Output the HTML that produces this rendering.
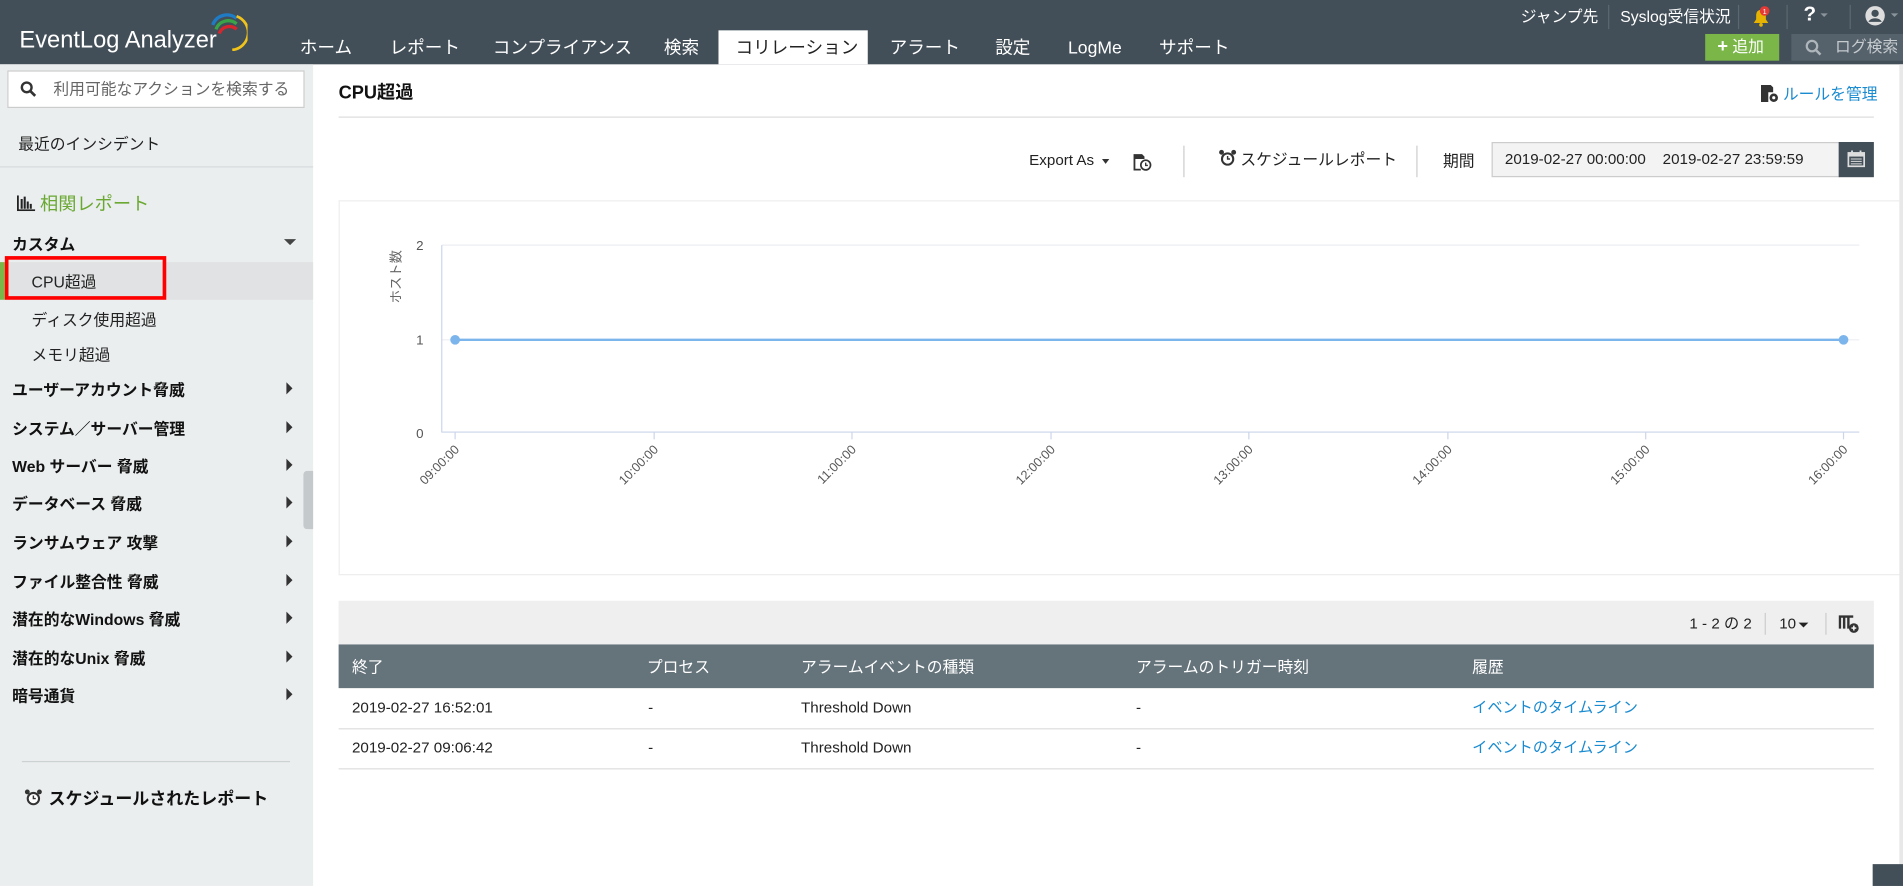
<!DOCTYPE html>
<html><head><meta charset="utf-8"><style>
*{margin:0;padding:0;box-sizing:border-box}
html,body{width:1903px;height:886px;overflow:hidden;background:#fff}
body{font-family:"Liberation Sans","Noto Sans CJK JP",sans-serif;color:#222;line-height:17px}
#w{position:absolute;left:0;top:0;width:1568px;height:730px;transform:scale(1.21365);transform-origin:0 0}
.a{position:absolute;white-space:nowrap}
.hdr{left:0;top:0;width:1568px;height:53px;background:#434f58}
.tab{top:32px;font-size:14.5px;color:#fff}
.sb{left:0;top:53px;width:258px;height:677px;background:#ebeeef}
.cat{left:10px;font-size:13px;font-weight:bold;color:#111}
.arr{left:236px;width:0;height:0;border-top:5px solid transparent;border-bottom:5px solid transparent;border-left:5px solid #333}
.sub{left:26px;font-size:13px;color:#222}
.th{top:541px;font-size:13px;color:#fff}
.td{font-size:12.5px;color:#222}
.lk{font-size:12.5px;color:#1a8bd0}
</style></head><body><div id="w">
<div class="a hdr"></div>
<div class="a" style="left:16px;top:22px;font-size:19.5px;line-height:22px;color:#fff">EventLog Analyzer</div>
<svg class="a" style="left:168px;top:8px" width="36" height="34" viewBox="0 0 40 38"><path d="M8 14 A14 14 0 0 1 30 8" stroke="#1e7bc4" stroke-width="3" fill="none"/><path d="M11 18 A12 12 0 0 1 30 13" stroke="#3aa548" stroke-width="3" fill="none"/><path d="M14 22 A10 10 0 0 1 30 18" stroke="#d9262e" stroke-width="3" fill="none"/><path d="M30 6 A16 16 0 0 1 26 37" stroke="#f2c31a" stroke-width="2.5" fill="none"/></svg>
<div class="a tab" style="left:247px">ホーム</div>
<div class="a tab" style="left:321px">レポート</div>
<div class="a tab" style="left:406px">コンプライアンス</div>
<div class="a tab" style="left:547px">検索</div>
<div class="a" style="left:592px;top:25px;width:123px;height:28px;background:#fff"></div>
<div class="a tab" style="left:606px;color:#222">コリレーション</div>
<div class="a tab" style="left:733px">アラート</div>
<div class="a tab" style="left:820px">設定</div>
<div class="a tab" style="left:880px">LogMe</div>
<div class="a tab" style="left:955px">サポート</div>
<div class="a" style="left:1253px;top:5px;font-size:13px;color:#fff">ジャンプ先</div>
<div class="a" style="left:1325px;top:4px;width:1px;height:20px;background:#5c6870"></div>
<div class="a" style="left:1335px;top:5px;font-size:13px;color:#fff">Syslog受信状況</div>
<div class="a" style="left:1432px;top:4px;width:1px;height:20px;background:#5c6870"></div>
<svg class="a" style="left:1442px;top:5px" width="18" height="18" viewBox="0 0 18 18"><path d="M3 14 L15 14 L13 11 L13 7 A4 4 0 0 0 5 7 L5 11 Z" fill="#e6b400"/><circle cx="9" cy="15.5" r="1.5" fill="#e6b400"/><circle cx="12" cy="4" r="4" fill="#e53935"/><text x="12" y="6.5" font-size="6" fill="#fff" text-anchor="middle" font-family="Liberation Sans">1</text></svg>
<div class="a" style="left:1472px;top:4px;width:1px;height:20px;background:#5c6870"></div>
<div class="a" style="left:1486px;top:3px;font-size:17px;color:#fff;font-weight:bold">?</div>
<div class="a" style="left:1500px;top:11px;border-top:3px solid #8a949b;border-left:3px solid transparent;border-right:3px solid transparent"></div>
<div class="a" style="left:1524px;top:4px;width:1px;height:20px;background:#5c6870"></div>
<svg class="a" style="left:1536px;top:4px" width="18" height="18" viewBox="0 0 18 18"><circle cx="9" cy="9" r="8" fill="#ddd"/><circle cx="9" cy="7" r="3" fill="#434f58"/><path d="M3.5 14 A6 5 0 0 1 14.5 14" fill="#434f58"/></svg>
<div class="a" style="left:1558px;top:11px;border-top:3px solid #8a949b;border-left:3px solid transparent;border-right:3px solid transparent"></div>
<div class="a" style="left:1405px;top:28px;width:61px;height:22px;background:#7ab648;color:#fff;font-size:13px;line-height:22px;padding-left:10px"><b style="font-size:15px">+</b> 追加</div>
<div class="a" style="left:1476px;top:28px;width:92px;height:22px;background:#56626b;color:#c5cbcf;font-size:13px;line-height:22px;padding-left:36px">ログ検索</div>
<svg class="a" style="left:1487px;top:32px" width="14" height="14" viewBox="0 0 14 14"><circle cx="6" cy="6" r="4.3" stroke="#aeb6bb" stroke-width="1.8" fill="none"/><path d="M9 9 L13 13" stroke="#aeb6bb" stroke-width="2"/></svg>

<div class="a sb"></div>
<div class="a" style="left:6px;top:58px;width:245px;height:31px;background:#fff;border:1px solid #ccc"></div>
<svg class="a" style="left:16px;top:66px" width="16" height="16" viewBox="0 0 16 16"><circle cx="6" cy="6" r="4" stroke="#333" stroke-width="2" fill="none"/><path d="M9 9 L13 13" stroke="#333" stroke-width="2.2"/></svg>
<div class="a" style="left:44px;top:65px;font-size:13px;color:#666">利用可能なアクションを検索する</div>
<div class="a" style="left:15px;top:110px;font-size:13px;color:#222">最近のインシデント</div>
<div class="a" style="left:0;top:137px;width:258px;height:1px;background:#d6dadc"></div>
<svg class="a" style="left:14px;top:161px" width="15" height="13" viewBox="0 0 15 13"><path d="M0 0v13h15v-1.5H1.5V0z M3 3h1.7v8H3z M5.5 1h1.7v10H5.5z M8 5h1.7v6H8z M10.5 7h1.7v4h-1.7z" fill="#222"/></svg>
<div class="a" style="left:33px;top:160px;font-size:15px;color:#6aa832">相関レポート</div>
<div class="a cat" style="left:10px;top:193px">カスタム</div>
<div class="a" style="left:234px;top:197px;border-top:5px solid #444;border-left:5px solid transparent;border-right:5px solid transparent"></div>
<div class="a" style="left:0;top:216px;width:258px;height:31px;background:#e0e2e3"></div>
<div class="a" style="left:0;top:216px;width:4px;height:31px;background:#7ab648"></div>
<div class="a" style="left:4px;top:211px;width:133px;height:36px;border:3px solid #f00"></div>
<div class="a sub" style="top:224px">CPU超過</div>
<div class="a sub" style="top:255px">ディスク使用超過</div>
<div class="a sub" style="top:284px">メモリ超過</div>
<div class="a cat" style="top:313px">ユーザーアカウント脅威</div><div class="a arr" style="top:315px"></div>
<div class="a cat" style="top:345px">システム／サーバー管理</div><div class="a arr" style="top:347px"></div>
<div class="a cat" style="top:376px">Web サーバー 脅威</div><div class="a arr" style="top:378px"></div>
<div class="a cat" style="top:407px">データベース 脅威</div><div class="a arr" style="top:409px"></div>
<div class="a cat" style="top:439px">ランサムウェア 攻撃</div><div class="a arr" style="top:441px"></div>
<div class="a cat" style="top:471px">ファイル整合性 脅威</div><div class="a arr" style="top:473px"></div>
<div class="a cat" style="top:502px">潜在的なWindows 脅威</div><div class="a arr" style="top:504px"></div>
<div class="a cat" style="top:534px">潜在的なUnix 脅威</div><div class="a arr" style="top:536px"></div>
<div class="a cat" style="top:565px">暗号通貨</div><div class="a arr" style="top:567px"></div>
<div class="a" style="left:18px;top:627px;width:221px;height:1px;background:#ccd1d4"></div>
<svg class="a" style="left:20px;top:650px" width="15" height="15" viewBox="0 0 15 15"><circle cx="7.5" cy="8" r="5.5" fill="#333"/><circle cx="7.5" cy="8" r="3.8" fill="#fff"/><path d="M7.5 5.5V8h2" stroke="#333" stroke-width="1.2" fill="none"/><circle cx="2.5" cy="2.5" r="2" fill="#333"/><circle cx="12.5" cy="2.5" r="2" fill="#333"/></svg>
<div class="a" style="left:40px;top:650px;font-size:14px;font-weight:bold;color:#111">スケジュールされたレポート</div>
<div class="a" style="left:250px;top:388px;width:8px;height:48px;background:#c4c9cc;border-radius:3px 0 0 3px"></div>

<div class="a" style="left:279px;top:68px;font-size:15px;font-weight:bold;color:#111">CPU超過</div>
<svg class="a" style="left:1450px;top:69px" width="16" height="16" viewBox="0 0 16 16"><path d="M1 1h8l2 2v4H1z M1 7h6v8H1z" fill="#333"/><circle cx="11.5" cy="11.5" r="3.5" fill="#333"/><circle cx="11.5" cy="11.5" r="1.3" fill="#fff"/></svg>
<div class="a" style="left:1469px;top:69px;font-size:13px;color:#1a8bd0">ルールを管理</div>
<div class="a" style="left:279px;top:96px;width:1265px;height:1px;background:#ddd"></div>

<div class="a" style="left:848px;top:124px;font-size:12.5px;color:#222">Export As</div>
<div class="a" style="left:908px;top:131px;border-top:4px solid #333;border-left:3px solid transparent;border-right:3px solid transparent"></div>
<svg class="a" style="left:933px;top:126px" width="16" height="15" viewBox="0 0 16 15"><path d="M1 1h7l2 2v2H2.5v8H7v1.5H1z" fill="#333"/><circle cx="11" cy="10" r="4" stroke="#333" stroke-width="1.4" fill="none"/><path d="M11 8v2.3h1.8" stroke="#333" stroke-width="1.1" fill="none"/></svg>
<div class="a" style="left:975px;top:120px;width:1px;height:26px;background:#ccc"></div>
<svg class="a" style="left:1004px;top:123px" width="15" height="15" viewBox="0 0 15 15"><circle cx="7.5" cy="8" r="5.5" fill="#333"/><circle cx="7.5" cy="8" r="3.8" fill="#fff"/><path d="M7.5 5.5V8h2" stroke="#333" stroke-width="1.2" fill="none"/><circle cx="2.5" cy="2.5" r="2" fill="#333"/><circle cx="12.5" cy="2.5" r="2" fill="#333"/></svg>
<div class="a" style="left:1022px;top:123px;font-size:13px;color:#222">スケジュールレポート</div>
<div class="a" style="left:1167px;top:120px;width:1px;height:26px;background:#ccc"></div>
<div class="a" style="left:1189px;top:124px;font-size:13px;color:#222">期間</div>
<div class="a" style="left:1229px;top:117px;width:287px;height:29px;background:#f3f3f3;border:1px solid #ccc"></div>
<div class="a" style="left:1240px;top:123px;font-size:12.5px;color:#222">2019-02-27 00:00:00&nbsp;&nbsp;&nbsp;&nbsp;2019-02-27 23:59:59</div>
<div class="a" style="left:1515px;top:117px;width:29px;height:29px;background:#434f58"></div>
<svg class="a" style="left:1522px;top:123px" width="15" height="15" viewBox="0 0 15 15"><rect x="1" y="3" width="13" height="11" fill="none" stroke="#ddd" stroke-width="1.4"/><rect x="1" y="3" width="13" height="3" fill="#ddd"/><path d="M4 1v3M11 1v3" stroke="#ddd" stroke-width="1.5"/><path d="M3 8h9M3 10h9M3 12h9" stroke="#ddd" stroke-width="0.8"/></svg>

<div class="a" style="left:279px;top:165px;width:1289px;height:309px;border:1px solid #eee;border-right:none"></div>
<svg class="a" style="left:279px;top:165px" width="1289" height="309">
<path d="M85 37H1253M85 115H1253M85 191H1253" stroke="#eceef2" stroke-width="1"/>
<path d="M85 37V191H1253" stroke="#ccd6eb" fill="none"/>
<g stroke="#ccd6eb"><path d="M96 191v6M260 191v6M423 191v6M587 191v6M750 191v6M914 191v6M1077 191v6M1240 191v6"/></g>
<path d="M96 115H1240" stroke="#7cb5ec" stroke-width="2"/>
<circle cx="96" cy="115" r="4" fill="#7cb5ec"/><circle cx="1240" cy="115" r="4" fill="#7cb5ec"/>
<g font-family="Liberation Sans" font-size="11" fill="#555" text-anchor="end"><text x="70" y="41">2</text><text x="70" y="119">1</text><text x="70" y="196">0</text></g>
<text transform="translate(51,63) rotate(-90)" font-family="Liberation Sans,Noto Sans CJK JP,sans-serif" font-size="11" fill="#666" text-anchor="middle">ホスト数</text>
<g font-family="Liberation Sans" font-size="10.5" fill="#555" text-anchor="end">
<text transform="translate(100,206) rotate(-45)">09:00:00</text>
<text transform="translate(264,206) rotate(-45)">10:00:00</text>
<text transform="translate(427,206) rotate(-45)">11:00:00</text>
<text transform="translate(591,206) rotate(-45)">12:00:00</text>
<text transform="translate(754,206) rotate(-45)">13:00:00</text>
<text transform="translate(918,206) rotate(-45)">14:00:00</text>
<text transform="translate(1081,206) rotate(-45)">15:00:00</text>
<text transform="translate(1244,206) rotate(-45)">16:00:00</text>
</g></svg>

<div class="a" style="left:279px;top:495px;width:1265px;height:36px;background:#efefef"></div>
<div class="a" style="left:1392px;top:506px;font-size:12.5px;color:#222">1 - 2 の 2</div>
<div class="a" style="left:1454px;top:505px;width:1px;height:18px;background:#ccc"></div>
<div class="a" style="left:1466px;top:506px;font-size:12.5px;color:#222">10</div>
<div class="a" style="left:1482px;top:513px;border-top:4px solid #222;border-left:4px solid transparent;border-right:4px solid transparent"></div>
<div class="a" style="left:1504px;top:505px;width:1px;height:18px;background:#ccc"></div>
<svg class="a" style="left:1515px;top:506px" width="17" height="16" viewBox="0 0 17 16"><path d="M0 1h12v2H0z M0 3h2v9H0z M3.5 3h2v9h-2z M7 3h2v9H7z" fill="#333"/><circle cx="12.5" cy="11.5" r="4" fill="#333"/><path d="M10.5 11.5h4M12.5 9.5v4" stroke="#fff" stroke-width="1.2"/></svg>
<div class="a" style="left:279px;top:531px;width:1265px;height:36px;background:#65737b"></div>
<div class="a th" style="left:290px">終了</div>
<div class="a th" style="left:533px">プロセス</div>
<div class="a th" style="left:660px">アラームイベントの種類</div>
<div class="a th" style="left:936px">アラームのトリガー時刻</div>
<div class="a th" style="left:1213px">履歴</div>
<div class="a td" style="left:290px;top:575px">2019-02-27 16:52:01</div>
<div class="a td" style="left:534px;top:575px">-</div>
<div class="a td" style="left:660px;top:575px">Threshold Down</div>
<div class="a td" style="left:936px;top:575px">-</div>
<div class="a lk" style="left:1213px;top:575px">イベントのタイムライン</div>
<div class="a" style="left:279px;top:600px;width:1265px;height:1px;background:#ddd"></div>
<div class="a td" style="left:290px;top:608px">2019-02-27 09:06:42</div>
<div class="a td" style="left:534px;top:608px">-</div>
<div class="a td" style="left:660px;top:608px">Threshold Down</div>
<div class="a td" style="left:936px;top:608px">-</div>
<div class="a lk" style="left:1213px;top:608px">イベントのタイムライン</div>
<div class="a" style="left:279px;top:633px;width:1265px;height:1px;background:#ddd"></div>
<div class="a" style="left:1565px;top:53px;width:3px;height:677px;background:#e8e8e8"></div>
<div class="a" style="left:1543px;top:712px;width:25px;height:18px;background:#434f58"></div>
</div></body></html>
